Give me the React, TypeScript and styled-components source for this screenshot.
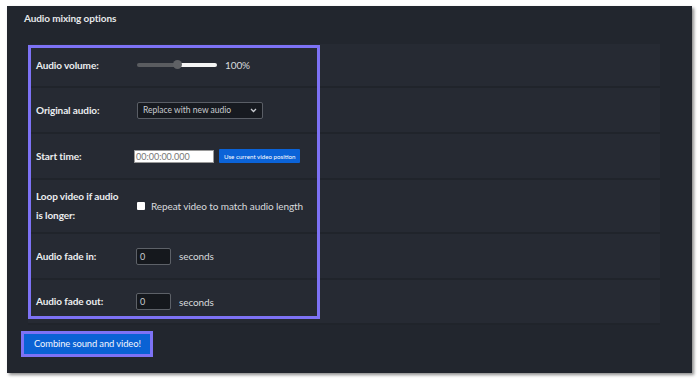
import styled, { createGlobalStyle } from "styled-components"

const GlobalStyle = createGlobalStyle`
    html, body {
        margin: 0;
        padding: 0;
        background: #ffffff;
    }
    body {
        font-family: Lato, "Liberation Sans", sans-serif;
    }
`

const Page = styled.div`
    width: 700px;
    height: 381px;
    padding: 6px 8px 8px 7px;
    box-sizing: border-box;
`

const Panel = styled.div`
    width: 685px;
    height: 367px;
    box-sizing: border-box;
    background: #22262e;
    box-shadow: 2px 2px 3px rgb(0 0 0 / 45%);
    padding: 0 0 0 21px;
    display: flex;
    flex-direction: column;
`

const Title = styled.div`
    color: #e6e8ea;
    font-size: 10px;
    font-weight: 700;
    letter-spacing: -0.1px;
    height: 38px;
    line-height: 25px;
    margin-left: -4px;
`

const Options = styled.div`
    position: relative;
    width: 632px;
    display: flex;
    flex-direction: column;
`

const Highlight = styled.div`
    position: absolute;
    left: 0;
    top: 1px;
    width: 292px;
    height: 274px;
    box-sizing: border-box;
    border: 3px solid #7d72f5;
    pointer-events: none;
`

const Row = styled.div<{ $h: number }>`
    height: ${p => p.$h}px;
    box-sizing: border-box;
    background: #262a33;
    border-bottom: 2px solid #20242b;
    display: flex;
    align-items: center;
    padding-left: 8px;
`

const Label = styled.div`
    width: 90px;
    margin-right: 11px;
    color: #eceef0;
    font-size: 10px;
    font-weight: 700;
    letter-spacing: -0.1px;
    line-height: 19px;
`

const Control = styled.div<{ $shift?: number }>`
    display: flex;
    align-items: center;
    gap: 8px;
    margin-left: ${p => p.$shift ?? 0}px;
    color: #d8dadd;
    font-size: 10px;
    letter-spacing: -0.1px;
`

const Slider = styled.div`
    position: relative;
    width: 80px;
    height: 4px;
    border-radius: 2px;
    background: linear-gradient(90deg, #5a5c60 0 50%, #f4f4f4 50% 100%);
`

const Thumb = styled.div`
    position: absolute;
    left: 36px;
    top: -3px;
    width: 9px;
    height: 9px;
    border-radius: 50%;
    background: #5f6165;
`

const Select = styled.div`
    width: 126px;
    height: 17px;
    box-sizing: border-box;
    border: 1px solid #5a5e66;
    border-radius: 2px;
    background: #171a20;
    color: #c9ccd1;
    font-size: 8.5px;
    letter-spacing: 0;
    display: flex;
    align-items: center;
    justify-content: space-between;
    padding: 0 5px;
`

const TimeInput = styled.div`
    width: 80px;
    height: 13px;
    box-sizing: border-box;
    background: #ffffff;
    border: 1px solid #9a9a9a;
    color: #777;
    font-size: 9px;
    letter-spacing: 0;
    line-height: 11px;
    padding-left: 1px;
`

const SmallButton = styled.div`
    height: 14px;
    padding: 0 5px;
    background: #0b63d8;
    border-radius: 1px;
    color: #ffffff;
    font-size: 6.2px;
    letter-spacing: 0;
    display: flex;
    align-items: center;
`

const Checkbox = styled.div`
    width: 8px;
    height: 8px;
    background: #ffffff;
    border-radius: 1px;
`

const NumInput = styled.div`
    width: 35px;
    height: 17px;
    box-sizing: border-box;
    background: #15181d;
    border: 1px solid #5d6168;
    border-radius: 2px;
    color: #c9ccd1;
    font-size: 9px;
    line-height: 15px;
    padding-left: 3px;
`

const ButtonFrame = styled.div`
    margin-top: 6px;
    margin-left: -7px;
    align-self: flex-start;
    border: 3px solid #7d72f5;
`

const MainButton = styled.div`
    background: #0a62d4;
    color: #f2f6ff;
    font-size: 9.4px;
    letter-spacing: -0.1px;
    height: 20px;
    line-height: 20px;
    padding: 0 9px 0 10px;
`

const Chevron = () => (
    <svg width="7" height="5" viewBox="0 0 7 5">
        <path d="M1 1 L3.5 3.5 L6 1" stroke="#c9ccd1" strokeWidth="1.3" fill="none" />
    </svg>
)

const App = () => {
    return (
        <Page>
            <GlobalStyle />
            <Panel>
                <Title>Audio mixing options</Title>
                <Options>
                    <Row $h={44}>
                        <Label>Audio volume:</Label>
                        <Control>
                            <Slider><Thumb /></Slider>
                            <span>100%</span>
                        </Control>
                    </Row>
                    <Row $h={46}>
                        <Label>Original audio:</Label>
                        <Control>
                            <Select>
                                <span>Replace with new audio</span>
                                <Chevron />
                            </Select>
                        </Control>
                    </Row>
                    <Row $h={46}>
                        <Label>Start time:</Label>
                        <Control $shift={-3} style={{ gap: 5 }}>
                            <TimeInput>00:00:00.000</TimeInput>
                            <SmallButton>Use current video position</SmallButton>
                        </Control>
                    </Row>
                    <Row $h={54}>
                        <Label>Loop video if audio is longer:</Label>
                        <Control style={{ gap: 6 }}>
                            <Checkbox />
                            <span>Repeat video to match audio length</span>
                        </Control>
                    </Row>
                    <Row $h={46}>
                        <Label>Audio fade in:</Label>
                        <Control $shift={-1}>
                            <NumInput>0</NumInput>
                            <span>seconds</span>
                        </Control>
                    </Row>
                    <Row $h={45}>
                        <Label>Audio fade out:</Label>
                        <Control $shift={-1}>
                            <NumInput>0</NumInput>
                            <span>seconds</span>
                        </Control>
                    </Row>
                    <Highlight />
                </Options>
                <ButtonFrame>
                    <MainButton>Combine sound and video!</MainButton>
                </ButtonFrame>
            </Panel>
        </Page>
    )
}

export default App
